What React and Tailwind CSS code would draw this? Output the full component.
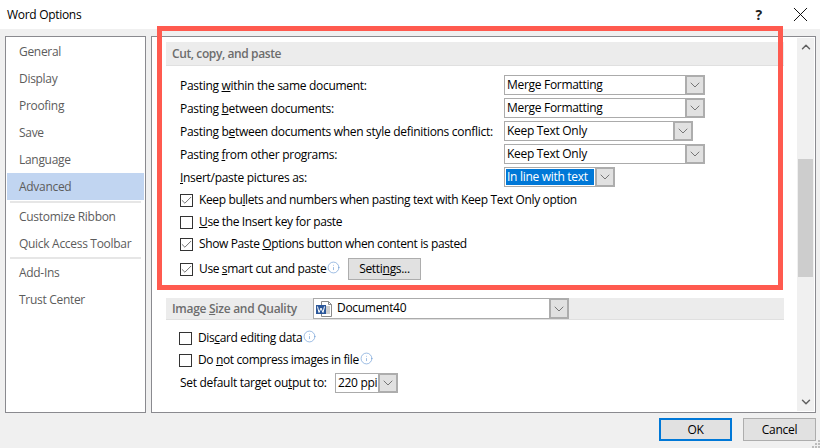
import React from 'react';
import { ChevronDown, ChevronUp, Check, X, Info } from 'lucide-react';

const NavItem = ({ label, active }) => (
    <div className={`h-[27px] pl-3 flex items-center text-[12px] text-[#5c5c5c] ${active ? 'bg-[#c1d5f1]' : ''}`}>
        {label}
    </div>
);

const NavLine = ({ className }) => <div className={`h-[2px] mx-[3px] bg-[#e6e6e6] ${className}`} />;

const ComboArrow = () => (
    <div className="w-[20px] shrink-0 -my-[1px] -mr-[1px] flex items-center justify-center bg-[#e1e1e1] border-2 border-[#adadad]">
        <ChevronDown size={16} strokeWidth={1} className="text-[#404040]" />
    </div>
);

const Combo = ({ width, text, selected }) => (
    <div className={`flex h-[20px] bg-white border border-[#ababab] ${width}`}>
        <div className="flex-1 min-w-0 flex items-center px-[1px]">
            <span className={`w-full h-[16px] leading-[16px] pl-[1px] text-[12px] whitespace-nowrap ${selected ? 'bg-[#0078d7] text-white' : 'text-black'}`}>
                {text}
            </span>
        </div>
        <ComboArrow />
    </div>
);

const PasteRow = ({ label, width, text, selected }) => (
    <div className="flex items-center h-[20px] mb-[3px]">
        <div className="w-[324px] pt-[1px] text-[12px] text-black whitespace-nowrap">{label}</div>
        <Combo width={width} text={text} selected={selected} />
    </div>
);

const CheckBox = ({ checked, label, info, className }) => (
    <div className={`flex items-center text-[12px] text-black whitespace-nowrap ${className}`}>
        <div className="w-[13px] h-[13px] mr-[6px] border border-[#333333] bg-white flex items-center justify-center">
            {checked && <Check size={13} strokeWidth={1.25} className="shrink-0 text-[#333333]" />}
        </div>
        <span className="tracking-[-0.37px]">{label}</span>
        {info && <Info size={13} strokeWidth={1.1} className="ml-[1px] -mt-[3px] text-[#5b8fd0]" />}
    </div>
);

const WordIcon = () => (
    <svg width="17" height="16" viewBox="0 0 17 16" className="shrink-0">
        <path d="M5.5 .5H12.5L15.5 3.5V15.5H5.5Z" fill="#fff" stroke="#8a8a8a" />
        <path d="M12.5 .5V3.5H15.5" fill="none" stroke="#8a8a8a" />
        <path d="M10 6H14M10 8H14M10 10H14M10 12H14" stroke="#a0a0a0" />
        <rect x="0" y="4" width="10" height="9" fill="#2b579a" />
        <path d="M1.5 5.5L3 11.5L5 7L7 11.5L8.5 5.5" fill="none" stroke="#fff" />
    </svg>
);

const ResizeGrip = () => (
    <svg width="8" height="8" viewBox="0 0 8 8" className="absolute right-0 bottom-0">
        <path d="M6 0h2v2H6zM3 3h2v2H3zM6 3h2v2H6zM0 6h2v2H0zM3 6h2v2H3zM6 6h2v2H6z" fill="#bdbdbd" />
    </svg>
);

const App = () => {
    return (
        <div className="relative w-[820px] h-[448px] overflow-hidden bg-[#f0f0f0] flex flex-col font-['Open_Sans',sans-serif] tracking-[-0.3px]">
            {/* Title bar */}
            <div className="h-[29px] bg-white flex items-center pl-[7px] shrink-0">
                <span className="text-[12px] text-black flex-1">Word Options</span>
                <span className="text-[14px] font-bold text-[#222222] mr-[26px]">?</span>
                <X size={25} strokeWidth={0.9} className="mr-[7px] text-black" />
            </div>

            {/* Body */}
            <div className="flex gap-[5px] pt-[7px] pl-[5px] pr-[4px] h-[384px] shrink-0">
                {/* Sidebar */}
                <div className="w-[141px] bg-white border border-[#8a8a8f] pt-[1px] px-[1px]">
                    <NavItem label="General" />
                    <NavItem label="Display" />
                    <NavItem label="Proofing" />
                    <NavItem label="Save" />
                    <NavItem label="Language" />
                    <NavItem label="Advanced" active />
                    <NavLine className="mt-[1px]" />
                    <NavItem label="Customize Ribbon" />
                    <NavItem label="Quick Access Toolbar" />
                    <NavLine />
                    <NavItem label="Add-Ins" />
                    <NavItem label="Trust Center" />
                </div>

                {/* Main panel */}
                <div className="flex-1 flex bg-white border border-[#8a8a8f]">
                    <div className="flex-1 min-w-0 pl-[14px] pr-[13px] pt-[5px]">
                        <div className="h-[24px] bg-[#ececec] border-b border-[#e0e0e0] pl-[6px] flex items-center text-[12px] font-semibold tracking-[-0.4px] text-[#6d6d6d]">
                            Cut, copy, and paste
                        </div>
                        <div className="pl-[14px] pt-[9px]">
                            <PasteRow label={<>Pasting <u>w</u>ithin the same document:</>} width="w-[201px]" text="Merge Formatting" />
                            <PasteRow label={<>Pasting <u>b</u>etween documents:</>} width="w-[201px]" text="Merge Formatting" />
                            <PasteRow label={<>Pasting b<u>e</u>tween documents when style definitions conflict:</>} width="w-[189px]" text="Keep Text Only" />
                            <PasteRow label={<>Pasting <u>f</u>rom other programs:</>} width="w-[201px]" text="Keep Text Only" />
                            <PasteRow label={<><u>I</u>nsert/paste pictures as:</>} width="w-[111px]" text="In line with text" selected />
                            <CheckBox className="h-[20px] mt-[2px]" checked label={<>Keep bu<u>l</u>lets and numbers when pasting text with Keep Text Only option</>} />
                            <CheckBox className="h-[20px] mt-[2px]" label={<><u>U</u>se the Insert key for paste</>} />
                            <CheckBox className="h-[20px] mt-[2px]" checked label={<>Show Paste <u>O</u>ptions button when content is pasted</>} />
                            <div className="flex items-center h-[22px] mt-[4px]">
                                <CheckBox className="w-[168px]" checked info label={<>Use <u>s</u>mart cut and paste</>} />
                                <button className="w-[73px] h-[22px] bg-[#e1e1e1] border border-[#adadad] text-[12px] text-black">
                                    Setti<u>n</u>gs...
                                </button>
                            </div>
                        </div>

                        <div className="h-[22px] mt-[18px] bg-[#ececec] border-b border-[#e0e0e0] pl-[6px] flex items-start text-[12px] font-semibold text-[#6d6d6d]">
                            <div className="w-[141px] h-[21px] flex items-center whitespace-nowrap">
                                <span>Image <u>S</u>ize and Quality</span>
                            </div>
                            <div className="w-[256px] h-[21px] flex bg-white border border-[#ababab]">
                                <div className="flex-1 flex items-center pl-[2px] gap-[4px] font-normal text-black">
                                    <WordIcon />
                                    <span className="-mt-[1px]">Document40</span>
                                </div>
                                <ComboArrow />
                            </div>
                        </div>
                        <div className="pl-[13px] pt-[8px]">
                            <CheckBox className="h-[20px]" info label={<>Dis<u>c</u>ard editing data</>} />
                            <CheckBox className="h-[20px] mt-[2px]" info label={<>Do <u>n</u>ot compress images in file</>} />
                            <div className="flex items-center h-[20px] mt-[3px] text-[12px] text-black">
                                <span className="w-[156px] pl-[1px] whitespace-nowrap">Set default target ou<u>t</u>put to:</span>
                                <Combo width="w-[63px]" text="220 ppi" />
                            </div>
                        </div>
                    </div>

                    {/* Scrollbar */}
                    <div className="w-[17px] bg-[#f0f0f0] my-[1px] mr-[1px] flex flex-col items-center">
                        <ChevronUp size={14} strokeWidth={2.5} className="mt-[2px] h-[14px] shrink-0 text-[#606060]" />
                        <div className="h-[105px] shrink-0" />
                        <div className="w-[15px] h-[118px] bg-[#cdcdcd] shrink-0" />
                        <div className="flex-1" />
                        <ChevronDown size={14} strokeWidth={2.5} className="mb-[2px] h-[14px] shrink-0 text-[#606060]" />
                    </div>
                </div>
            </div>

            {/* Footer */}
            <div className="flex justify-end gap-[11px] pt-[5px] pr-[4px]">
                <button className="w-[73px] h-[23px] bg-[#e1e1e1] border-2 border-[#0078d7] text-[12px] text-black">OK</button>
                <button className="w-[73px] h-[23px] bg-[#e1e1e1] border border-[#adadad] text-[12px] text-black">Cancel</button>
            </div>

            <ResizeGrip />

            {/* Annotation rectangle over the screenshot */}
            <div className="absolute left-[157px] top-[26px] w-[626px] h-[264px] border-[5px] border-[#ff5a4f] pointer-events-none" />
        </div>
    );
};

export default App;
